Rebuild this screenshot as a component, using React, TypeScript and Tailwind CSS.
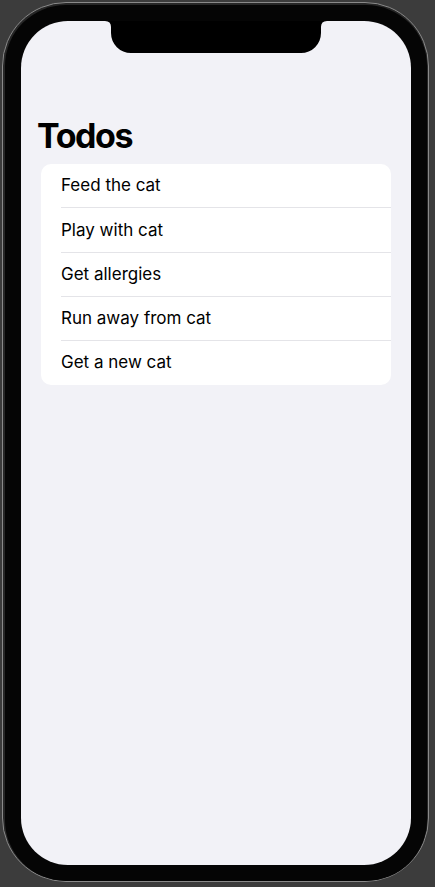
const todos = ['Feed the cat', 'Play with cat', 'Get allergies', 'Run away from cat', 'Get a new cat'];

function Notch() {
  return (
    <svg className="absolute top-0 left-[84px]" width="222" height="32" viewBox="0 0 222 32">
      <path d="M0 0 Q6 0 6 6 L6 12 A20 20 0 0 0 26 32 L196 32 A20 20 0 0 0 216 12 L216 6 Q216 0 222 0 Z" fill="#000" />
    </svg>
  );
}

export default function App() {
  return (
    <div className="w-[435px] h-[887px] bg-[#3c3c3c] pt-[2px] pl-[2px] overflow-hidden font-['Inter',sans-serif]">
      <div className="w-[427px] h-[880px] rounded-[64px] border border-[#8a8a8a] bg-[#262626] pt-[2px] pl-[2px] pr-[1px]">
        <div className="w-full h-full rounded-[61px] bg-[#050505] p-[16px]">
          <div className="relative h-[844px] rounded-[47px] bg-[#f2f2f7] overflow-hidden">
            <Notch />
            <div className="pt-[94px] px-4">
              <h1 className="text-[34px] leading-[41px] font-bold text-black tracking-[-1.4px]">Todos</h1>
            </div>
            <div className="mt-2 mx-5 bg-white rounded-[10px]">
              {todos.map((todo, i) => (
                <div key={todo} className="pl-5">
                  <div
                    className={`box-content h-[42.25px] pt-px border-b flex items-center text-[17px] text-black ${
                      i < todos.length - 1 ? 'border-[#e4e4e8]' : 'border-transparent'
                    }`}
                  >
                    {todo}
                  </div>
                </div>
              ))}
            </div>
          </div>
        </div>
      </div>
    </div>
  );
}
